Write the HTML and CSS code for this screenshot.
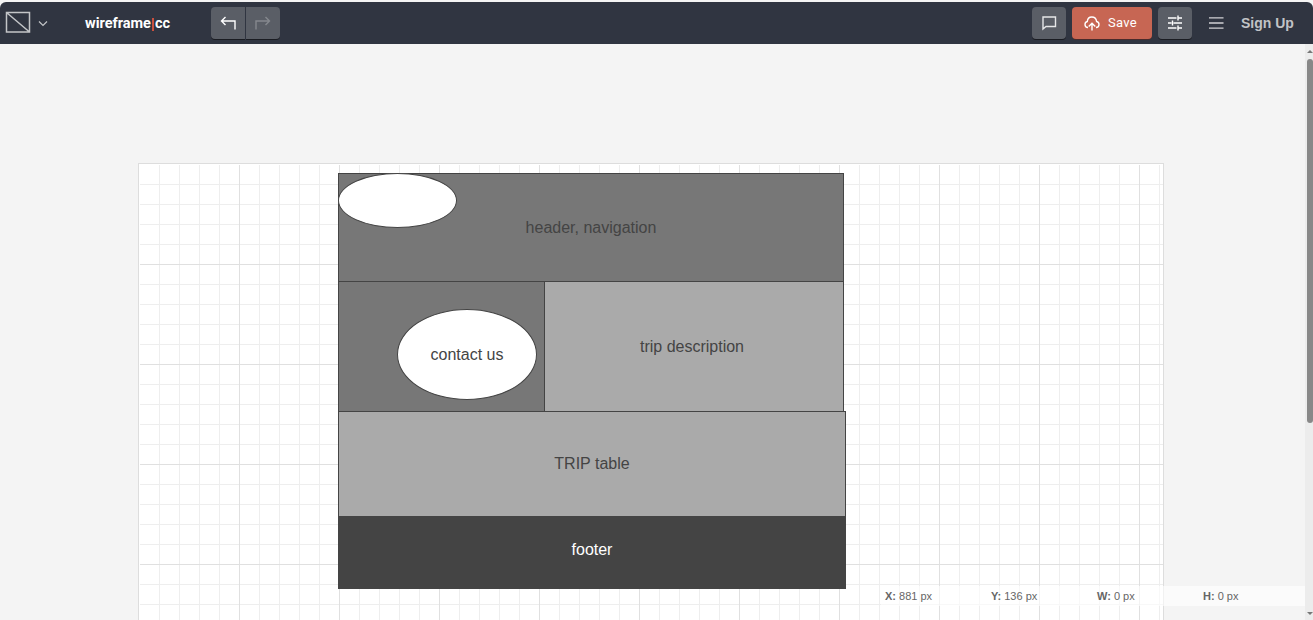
FILE: index.html
```html
<!DOCTYPE html>
<html lang="en">
<head>
<meta charset="utf-8">
<title>wireframe|cc</title>
<link rel="stylesheet" href="styles.css">
</head>
<body>
<header class="toolbar">
  <button class="tool" aria-label="Stencil">
    <svg width="44" height="24" viewBox="0 0 44 24" fill="none" stroke="#c3c5c8"><path d="M1.500 1.500h23v19.500h-23zM1.500 1.500l23 19.500" stroke-width="1.500"/><path d="M34 10.500l4 4 4-4" stroke-width="1.200"/></svg>
  </button>
  <div class="brand">wireframe<span class="brand-bar"></span>cc</div>
  <div class="history">
    <button class="btn undo" aria-label="Undo"><svg width="16" height="14" viewBox="0 0 16 14" fill="none" stroke="#fff" stroke-width="1.400"><path d="M5.500 1L1.500 5l4 4M1.500 5h13.500v8.500"/></svg></button>
    <button class="btn redo" aria-label="Redo"><svg width="16" height="14" viewBox="0 0 16 14" fill="none" stroke="#85888e" stroke-width="1.400"><path d="M10.500 1L14.500 5l-4 4M14.500 5H1v8.500"/></svg></button>
  </div>
  <div class="actions">
    <button class="btn comment" aria-label="Comments"><svg width="16" height="16" viewBox="0 0 16 16" fill="none" stroke="#e6e7e8" stroke-width="1.400"><path d="M2 2h12.500v9.500H5L2 14z"/></svg></button>
    <button class="btn save"><svg width="16" height="15" viewBox="0 0 16 15" fill="none" stroke="#fff" stroke-width="1.400"><path d="M4 11.500A3 3 0 0 1 1 8.500C1 7 2 5.800 3.300 5.500C3.500 2.700 5.400 1 7.800 1c2.600 0 4.500 1.800 4.800 4.500C14 5.800 15 7 15 8.500a3 3 0 0 1-3 3M8 14.500V7.500M4.700 10.500L8 7.200l3.300 3.300"/></svg><span>Save</span></button>
    <button class="btn settings" aria-label="Settings"><svg width="16" height="16" viewBox="0 0 16 16" fill="none" stroke="#fff" stroke-width="1.400"><path d="M1 3h8.500M11 3h4M11 .5v5M1 8h3.500M6.500 8H15M5.500 5.500v5M1 13h8.500M11 13h4M11 10.500v5"/></svg></button>
    <button class="menu" aria-label="Menu"><svg width="16" height="14" viewBox="0 0 16 14" fill="none" stroke="#cfd0d3" stroke-width="1.400"><path d="M0 1.500h15.500M0 7h15.500M0 12.500h15.500"/></svg></button>
    <a class="signup">Sign Up</a>
  </div>
</header>
<main class="workspace">
  <section class="page">
    <div class="grid"></div>
    <div class="shape banner">header, navigation</div>
    <div class="shape side"></div>
    <div class="shape desc">trip description</div>
    <div class="shape table">TRIP table</div>
    <div class="shape foot">footer</div>
    <div class="shape oval logo-oval"></div>
    <div class="shape oval contact">contact us</div>
  </section>
  <div class="status">
    <div><b>X:</b> 881 px</div><div><b>Y:</b> 136 px</div><div><b>W:</b> 0 px</div><div><b>H:</b> 0 px</div>
  </div>
  <div class="scrollbar"><i class="up"></i><i class="thumb"></i><i class="down"></i></div>
</main>
</body>
</html>
```
FILE: styles.css
```css
* { box-sizing: border-box; }
body {
  margin: 0;
  padding-top: 2px;
  height: 620px;
  overflow: hidden;
  background: #f4f4f4;
  font-family: "Liberation Sans", Arial, sans-serif;
}
button { border: 0; padding: 0; background: none; font: inherit; }
svg { display: block; }

.toolbar {
  display: flex;
  align-items: flex-start;
  height: 42px;
  padding: 5px 19px 0 5px;
  background: #303541;
  border-radius: 6px 6px 0 0;
}
.tool { width: 44px; padding-top: 4px; }
.brand {
  display: flex;
  align-items: center;
  width: 126px;
  margin-left: 36px;
  font: bold 14.500px/33px Roboto, sans-serif;
  color: #fff;
  white-space: nowrap;
}
.brand-bar { width: 2px; height: 13px; margin: 2px 1px 0; background: #c9503f; }
.history { display: flex; gap: 1px; }
.btn {
  display: flex;
  align-items: center;
  justify-content: center;
  width: 34px;
  height: 32px;
  background: #5a5e66;
  border-radius: 4px;
  box-shadow: 0 1px 0 #1a1c22;
}
.undo { border-radius: 4px 0 0 4px; }
.redo { border-radius: 0 4px 4px 0; }
.actions { display: flex; gap: 6px; margin-left: auto; }
.save {
  width: 80px;
  gap: 8px;
  padding-right: 3px;
  background: #c76653;
  color: #fff;
  font: 13px Roboto, sans-serif;
  letter-spacing: .3px;
  box-shadow: 0 1px 0 #492b2b;
}
.save span { margin-top: -1px; }
.menu {
  display: flex;
  align-items: center;
  width: 15px;
  height: 32px;
  margin-left: 11px;
}
.signup {
  width: 53px;
  margin-left: 11px;
  font-weight: bold;
  font-size: 14px;
  line-height: 32px;
  color: #c1c3c6;
  white-space: nowrap;
}

.workspace { position: relative; height: 576px; padding: 119px 0 0 138px; overflow: hidden; }
.page {
  position: relative;
  width: 1026px;
  height: 700px;
  padding: 1px 0 0 1px;
  background: #fff;
  border: 1px solid #ddd;
}
.grid {
  height: 690px;
  background:
    repeating-linear-gradient(90deg, transparent 0 99px, #e0e0e0 99px 100px),
    repeating-linear-gradient(transparent 0 99px, #e0e0e0 99px 100px),
    repeating-linear-gradient(90deg, transparent 0 19px, #eee 19px 20px),
    repeating-linear-gradient(transparent 0 19px, #eee 19px 20px);
}
.shape {
  position: absolute;
  display: flex;
  align-items: center;
  justify-content: center;
  border: 1px solid #444;
  font-size: 16px;
  color: #444;
}
.banner { left: 199px; top: 9px; width: 506px; height: 109px; background: #777; }
.side { left: 199px; top: 117px; width: 207px; height: 131px; background: #777; }
.desc { left: 405px; top: 117px; width: 300px; height: 131px; padding-right: 4px; background: #aaa; }
.table { left: 199px; top: 247px; width: 508px; height: 106px; background: #aaa; }
.foot { left: 199px; top: 352px; width: 508px; height: 73px; padding-bottom: 6px; background: #444; color: #fff; }
.oval { border-radius: 50%; background: #fff; }
.logo-oval { left: 199px; top: 9px; width: 119px; height: 55px; }
.contact { left: 258px; top: 145px; width: 140px; height: 91px; }

/* Readouts and scrollbar float over the canvas */
.status {
  position: absolute;
  right: 8px;
  bottom: 14px;
  display: grid;
  grid-template-columns: repeat(4, 106px);
  width: 424px;
  height: 20px;
  padding-left: 4px;
  overflow: hidden;
  background: rgba(255, 255, 255, .6);
  font-size: 11px;
  line-height: 20px;
  color: #666;
}
.scrollbar {
  position: absolute;
  top: 0;
  right: 0;
  bottom: 0;
  display: flex;
  flex-direction: column;
  align-items: flex-end;
  width: 8px;
  background: #ececec;
  overflow: hidden;
}
.thumb { width: 6px; height: 364px; margin-top: 6px; border-radius: 3px; background: #888; }
.up, .down { border: 3px solid transparent; }
.up { margin-top: 3px; border-bottom-color: #777; border-top-width: 3px; }
.down { margin-top: auto; margin-bottom: 2px; border-top-color: #777; }
```
